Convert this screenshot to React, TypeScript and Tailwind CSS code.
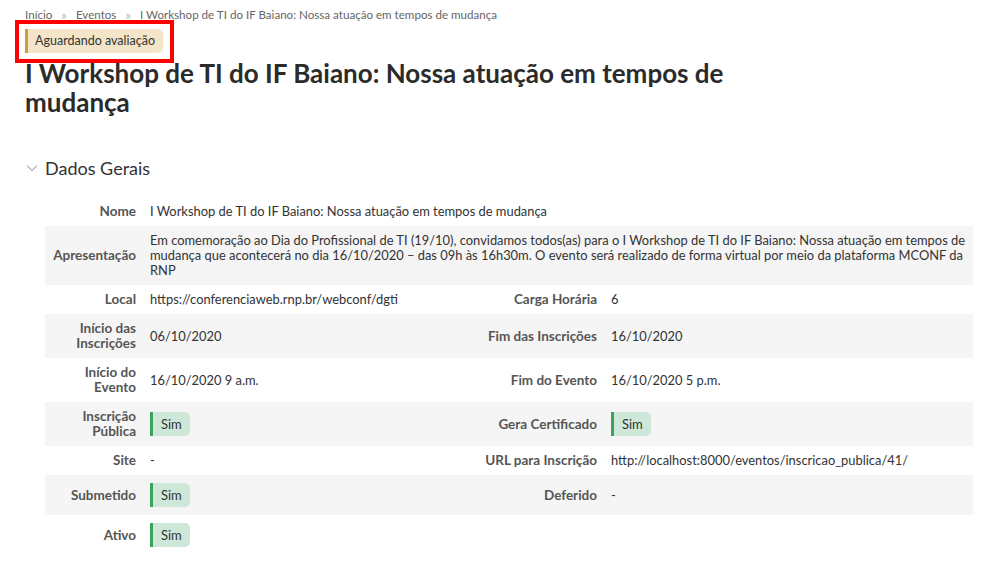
const rows = [
  { bg: "bg-white", cells: [["Nome", "I Workshop de TI do IF Baiano: Nossa atuação em tempos de mudança"]] },
  {
    bg: "bg-[#f5f5f5]",
    cells: [
      [
        "Apresentação",
        "Em comemoração ao Dia do Profissional de TI (19/10), convidamos todos(as) para o I Workshop de TI do IF Baiano: Nossa atuação em tempos de mudança que acontecerá no dia 16/10/2020 – das 09h às 16h30m. O evento será realizado de forma virtual por meio da plataforma MCONF da RNP",
      ],
    ],
  },
  { bg: "bg-white", cells: [["Local", "https://conferenciaweb.rnp.br/webconf/dgti"], ["Carga Horária", "6"]] },
  { bg: "bg-[#f5f5f5]", cells: [["Início das Inscrições", "06/10/2020"], ["Fim das Inscrições", "16/10/2020"]] },
  { bg: "bg-white", cells: [["Início do Evento", "16/10/2020 9 a.m."], ["Fim do Evento", "16/10/2020 5 p.m."]] },
  { bg: "bg-[#f5f5f5]", cells: [["Inscrição Pública", "$sim"], ["Gera Certificado", "$sim"]] },
  { bg: "bg-white", cells: [["Site", "-"], ["URL para Inscrição", "http://localhost:8000/eventos/inscricao_publica/41/"]] },
  { bg: "bg-[#f5f5f5]", cells: [["Submetido", "$sim"], ["Deferido", "-"]] },
  { bg: "bg-white", cells: [["Ativo", "$sim"]] },
]

const Sim = () => (
  <span className="inline-flex h-[24px] items-center border-l-[3px] border-[#3ba55c] bg-[#cde7d8] rounded-r-[5px] pl-[8px] pr-[8px] text-[13px] text-[#333]">
    Sim
  </span>
)

const Value = ({ v }: { v: string }) => (v === "$sim" ? <Sim /> : <>{v}</>)

export default function App() {
  return (
    <div className="relative w-[995px] h-[566px] bg-white pl-[25px] pt-[6px] font-['Lato',sans-serif] text-[#333] overflow-hidden">
      <nav className="flex items-center gap-[8px] text-[11.6px] leading-[18px] text-[#666]">
        <span className="underline">Início</span>
        <span className="text-[#bbb] text-[13px] px-[1px]">»</span>
        <span className="underline">Eventos</span>
        <span className="text-[#bbb] text-[13px] px-[1px]">»</span>
        <span>I Workshop de TI do IF Baiano: Nossa atuação em tempos de mudança</span>
      </nav>

      <div className="mt-[5px] flex">
        <span className="inline-flex h-[24px] items-center border-l-[3px] border-[#c9a233] bg-[#f4e5c9] rounded-r-[5px] pl-[7px] pr-[8px] text-[12.5px] text-[#333]">
          Aguardando avaliação
        </span>
      </div>
      {/* annotation box */}
      <div className="absolute left-[15px] top-[20px] w-[159px] h-[43px] border-[4px] border-[#ff0000]" />

      <h1 className="mt-[6px] w-[740px] text-[26px] leading-[29px] font-bold text-[#2b2b2b]">
        I Workshop de TI do IF Baiano: Nossa atuação em tempos de mudança
      </h1>

      <div className="mt-[40px] flex items-center gap-[7px]">
        <svg width="12" height="8" viewBox="0 0 12 8" fill="none" className="ml-[1px]">
          <path d="M1 1.5 L6 6.5 L11 1.5" stroke="#bbb" strokeWidth="1.3" />
        </svg>
        <h2 className="text-[18px] leading-[22px] text-[#333]">Dados Gerais</h2>
      </div>

      <div className="mt-[18px] ml-[20px] w-[928px] text-[12.9px] leading-[15px]">
        {rows.map((r, i) => (
          <div key={i} className={`grid grid-cols-[98px_332px_129px_1fr] items-center ${r.bg}`}>
            {r.cells.length === 1 && r.cells[0][0] !== "Ativo" ? (
              <>
                <div className="px-[7px] py-[7px] text-right text-[13.5px] font-bold text-[#555]">{r.cells[0][0]}</div>
                <div className="col-span-3 pl-[7px] pr-[4px] py-[7px]">{r.cells[0][1]}</div>
              </>
            ) : (
              r.cells.map((c, j) => (
                <div key={j} className="contents">
                  <div className="px-[7px] py-[7px] text-right text-[13.5px] font-bold text-[#555]">{c[0]}</div>
                  <div className={`px-[7px] ${c[1] === "$sim" ? "py-[8px]" : "py-[7px]"}`}>
                    <Value v={c[1]} />
                  </div>
                </div>
              ))
            )}
          </div>
        ))}
      </div>
    </div>
  )
}
